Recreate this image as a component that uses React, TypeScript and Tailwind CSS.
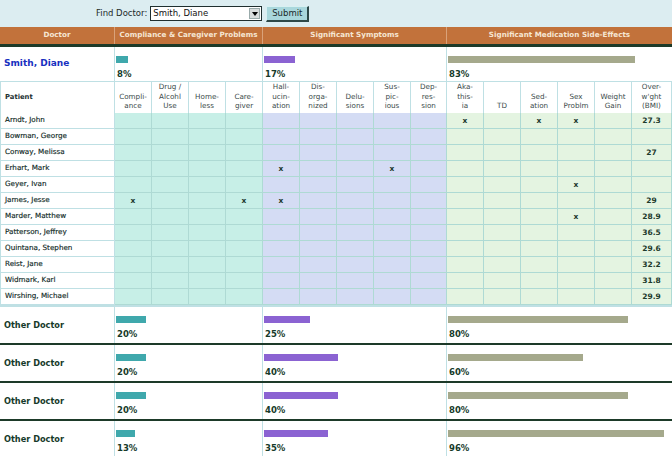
import React from "react";

const SUB = [
  ["Compli-", "ance"],
  ["Drug /", "Alcohl", "Use"],
  ["Home-", "less"],
  ["Care-", "giver"],
  ["Hall-", "ucin-", "ation"],
  ["Dis-", "orga-", "nized"],
  ["Delu-", "sions"],
  ["Sus-", "pic-", "ious"],
  ["Dep-", "res-", "sion"],
  ["Aka-", "this-", "ia"],
  ["TD"],
  ["Sed-", "ation"],
  ["Sex", "Problm"],
  ["Weight", "Gain"],
  ["Over-", "w'ght", "(BMI)"],
];

const PATIENTS: { name: string; x: number[]; bmi?: string }[] = [
  { name: "Arndt, John", x: [9, 11, 12], bmi: "27.3" },
  { name: "Bowman, George", x: [] },
  { name: "Conway, Melissa", x: [], bmi: "27" },
  { name: "Erhart, Mark", x: [4, 7] },
  { name: "Geyer, Ivan", x: [12] },
  { name: "James, Jesse", x: [0, 3, 4], bmi: "29" },
  { name: "Marder, Matthew", x: [12], bmi: "28.9" },
  { name: "Patterson, Jeffrey", x: [], bmi: "36.5" },
  { name: "Quintana, Stephen", x: [], bmi: "29.6" },
  { name: "Reist, Jane", x: [], bmi: "32.2" },
  { name: "Widmark, Karl", x: [], bmi: "31.8" },
  { name: "Wirshing, Michael", x: [], bmi: "29.9" },
];

const OTHERS = [
  [20, 25, 80],
  [20, 40, 60],
  [20, 40, 80],
  [13, 35, 96],
];

const GW = [148, 184, 225];
const BAR = ["bg-[#3fa8ac]", "bg-[#8b63d2]", "bg-[#a5a98c]"];

function groupBg(i: number) {
  if (i < 4) return "bg-[#c7efe7]";
  if (i < 9) return "bg-[#d4dcf4]";
  return "bg-[#e4f4e1]";
}

function BarCell({ pct, g }: { pct: number; g: number }) {
  return (
    <div className="relative border-r border-[#bfe0e4] bg-white last:border-r-0">
      <div
        className={`absolute left-px top-[9px] h-[7px] ${BAR[g]}`}
        style={{ width: Math.round((pct / 100) * GW[g]) }}
      />
      <div className="absolute left-[2px] top-[22px] text-[8.5px] font-bold leading-[10px] text-[#163a2a]">
        {pct}%
      </div>
    </div>
  );
}

const SUBCOLS =
  "grid grid-cols-[115px_37px_37px_37px_37px_37px_37px_37px_37px_36px_37px_37px_37px_37px_37px_40px]";
const MAINCOLS = "grid grid-cols-[115px_148px_184px_225px]";

export default function App() {
  return (
    <div
      className="w-[672px] h-[456px] overflow-hidden bg-[#dcedf1] text-[#163a2a]"
      style={{ fontFamily: '"DejaVu Sans", Verdana, sans-serif' }}
    >
      {/* Top bar */}
      <div className="flex h-[27px] items-center pl-[96px]">
        <span className="text-[8.5px] text-[#1c2a2a] mr-[3px]">Find Doctor:</span>
        <div className="flex h-[15px] w-[112px] items-center border border-[#1f2f2f] bg-white">
          <span className="flex-1 pl-[2px] text-[8.5px] leading-none text-[#111]">Smith, Diane</span>
          <div className="flex h-[11px] w-[11px] items-center justify-center border border-[#9aa] bg-[#d8dcdc] mr-px">
            <div className="h-0 w-0 border-l-[3px] border-r-[3px] border-t-[4px] border-l-transparent border-r-transparent border-t-black" />
          </div>
        </div>
        <div className="ml-[4px] flex h-[16px] w-[43px] items-center justify-center border border-t-[#d8f0f2] border-l-[#d8f0f2] border-b-[#2d4848] border-r-[#2d4848] border-b-2 border-r-2 bg-[#a9d7dc] text-[8.5px] text-[#1a2a2a]">
          Submit
        </div>
      </div>

      {/* Header */}
      <div className={`${MAINCOLS} h-[20px] bg-[#c2723b] border-b-[3px] border-[#1d3a29] text-[7.2px] font-bold text-[#f6e6d3] whitespace-nowrap`}>
        <div className="flex items-center justify-center border-r border-[#d9a27a]">Doctor</div>
        <div className="flex items-center justify-center border-r border-[#d9a27a]">Compliance &amp; Caregiver Problems</div>
        <div className="flex items-center justify-center border-r border-[#d9a27a]">Significant Symptoms</div>
        <div className="flex items-center justify-center">Significant Medication Side-Effects</div>
      </div>

      {/* Smith row */}
      <div className={`${MAINCOLS} h-[35px] border-b border-[#bfe0e4]`}>
        <div className="flex items-center border-r border-[#bfe0e4] bg-white pl-[4px] text-[9px] font-bold text-[#1830c0]">
          Smith, Diane
        </div>
        <BarCell pct={8} g={0} />
        <BarCell pct={17} g={1} />
        <BarCell pct={83} g={2} />
      </div>

      {/* Patient header */}
      <div className={`${SUBCOLS} h-[31px] border-b border-[#bfe0e4]`}>
        <div className="flex items-center border-r border-l border-[#bfe0e4] bg-white pl-[4px] text-[6.8px] font-bold text-[#1c3232]">
          Patient
        </div>
        {SUB.map((lines, i) => (
          <div
            key={i}
            className="flex flex-col items-center justify-end border-r border-[#bfe0e4] bg-white pb-[2px] text-[7.2px] leading-[9.5px] text-[#3a4a4a]"
          >
            {lines.map((l, j) => (
              <span key={j}>{l}</span>
            ))}
          </div>
        ))}
      </div>

      {/* Patient rows */}
      {PATIENTS.map((p, r) => (
        <div key={r} className={`${SUBCOLS} h-[16px]`}>
          <div className="flex items-center border-r border-l border-b border-[#bfe0e4] bg-white pl-[4px] text-[7.2px] text-[#102a26] [-webkit-text-stroke:0.15px_#102a26]">
            {p.name}
          </div>
          {SUB.map((_, i) => (
            <div
              key={i}
              className={`flex items-center justify-center border-r border-b border-[#aedad4] ${groupBg(i)} text-[7.5px] font-bold text-[#1d3a2c]`}
            >
              {i === 14 ? p.bmi ?? "" : p.x.includes(i) ? "x" : ""}
            </div>
          ))}
        </div>
      ))}

      {/* Other doctors */}
      {OTHERS.map((o, k) => (
        <div
          key={k}
          className={`${MAINCOLS} h-[38px] ${k === 0 ? "border-t-2 border-[#bfe0e4]" : "border-t-2 border-[#1d3a29]"}`}
        >
          <div className="flex items-center border-r border-[#bfe0e4] bg-white pl-[4px] text-[8.2px] font-bold text-[#163a2a]">
            Other Doctor
          </div>
          <BarCell pct={o[0]} g={0} />
          <BarCell pct={o[1]} g={1} />
          <BarCell pct={o[2]} g={2} />
        </div>
      ))}
    </div>
  );
}
